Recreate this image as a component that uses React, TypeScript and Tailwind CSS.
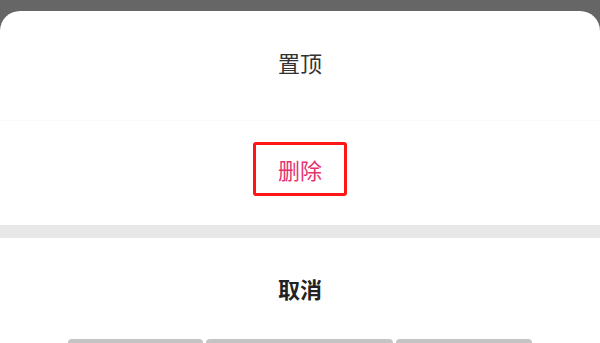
export default function App() {
  return (
    <div
      className="h-[343px] w-[600px] overflow-hidden bg-[#666666] pt-[11px]"
      style={{ fontFamily: '"Noto Sans CJK SC", "Noto Sans", sans-serif' }}
    >
      <div className="flex h-[332px] flex-col rounded-t-[20px] bg-white">
        <div className="flex h-[102px] items-center justify-center text-[22px] text-[#333333]">置顶</div>
        <div className="h-[7px]" />
        <div className="h-px bg-[#fafafa]" />
        <div className="flex h-[104px] flex-col items-center pt-[21px]">
          <div className="flex h-[54px] w-[94px] items-center justify-center rounded-[3px] border-[3px] border-[#ff1616] text-[22px] text-[#e5336f]">
            删除
          </div>
        </div>
        <div className="h-[13px] bg-[#e8e8e8]" />
        <div className="flex h-[101px] items-center justify-center text-[22px] font-bold text-[#222222]">取消</div>
        <div className="flex gap-[3px] pl-[68px]">
          <div className="h-[4px] w-[135px] rounded-t-sm bg-[#c4c4c4]" />
          <div className="h-[4px] w-[187px] rounded-t-sm bg-[#c4c4c4]" />
          <div className="h-[4px] w-[136px] rounded-t-sm bg-[#c4c4c4]" />
        </div>
      </div>
    </div>
  );
}
